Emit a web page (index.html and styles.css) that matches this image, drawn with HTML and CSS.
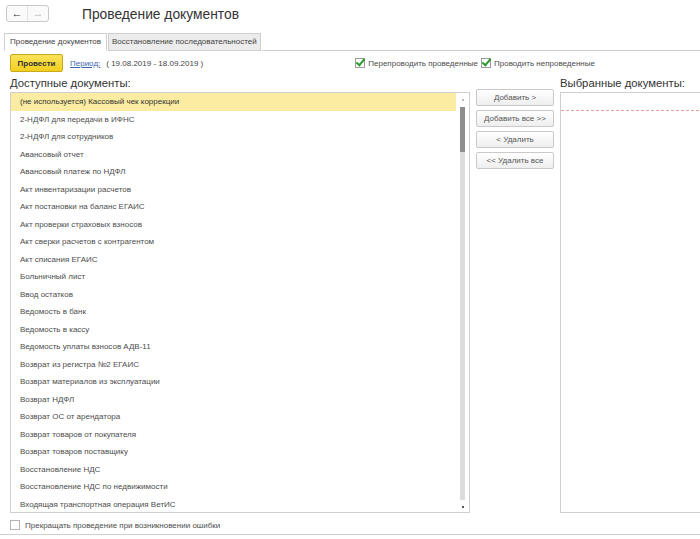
FILE: index.html
```html
<!DOCTYPE html>
<html lang="ru">
<head>
    <meta charset="UTF-8">
    <title>Проведение документов</title>
    <link rel="stylesheet" href="styles.css">
</head>
<body>
    <div class="window">
        <div class="header">
            <div class="nav">
                <span class="nav-btn">&#8592;</span>
                <span class="nav-btn off">&#8594;</span>
            </div>
            <h1>Проведение документов</h1>
        </div>

        <div class="tabs">
            <div class="tab active">Проведение документов</div>
            <div class="tab">Восстановление последовательностей</div>
            <div class="tab-line"></div>
        </div>

        <div class="panel">
            <div class="toolbar">
                <button class="btn-main">Провести</button>
                <a class="period-link">Период:</a>
                <span class="period">( 19.08.2019 - 18.09.2019 )</span>
                <label class="check"><span class="box checked"></span>Перепроводить проведенные</label>
                <label class="check"><span class="box checked"></span>Проводить непроведенные</label>
            </div>

            <div class="main">
                <div class="col-left">
                    <div class="caption">Доступные документы:</div>
                    <div class="list">
                        <ul class="items">
                            <li class="selected">(не используется) Кассовый чек коррекции</li>
                            <li>2-НДФЛ для передачи в ИФНС</li>
                            <li>2-НДФЛ для сотрудников</li>
                            <li>Авансовый отчет</li>
                            <li>Авансовый платеж по НДФЛ</li>
                            <li>Акт инвентаризации расчетов</li>
                            <li>Акт постановки на баланс ЕГАИС</li>
                            <li>Акт проверки страховых взносов</li>
                            <li>Акт сверки расчетов с контрагентом</li>
                            <li>Акт списания ЕГАИС</li>
                            <li>Больничный лист</li>
                            <li>Ввод остатков</li>
                            <li>Ведомость в банк</li>
                            <li>Ведомость в кассу</li>
                            <li>Ведомость уплаты взносов АДВ-11</li>
                            <li>Возврат из регистра №2 ЕГАИС</li>
                            <li>Возврат материалов из эксплуатации</li>
                            <li>Возврат НДФЛ</li>
                            <li>Возврат ОС от арендатора</li>
                            <li>Возврат товаров от покупателя</li>
                            <li>Возврат товаров поставщику</li>
                            <li>Восстановление НДС</li>
                            <li>Восстановление НДС по недвижимости</li>
                            <li>Входящая транспортная операция ВетИС</li>
                        </ul>
                        <div class="scrollbar">
                            <span class="arrow"></span>
                            <div class="track"><div class="thumb"></div></div>
                            <span class="arrow down"></span>
                        </div>
                    </div>
                </div>

                <div class="col-buttons">
                    <button class="btn">Добавить &gt;</button>
                    <button class="btn">Добавить все &gt;&gt;</button>
                    <button class="btn">&lt; Удалить</button>
                    <button class="btn">&lt;&lt; Удалить все</button>
                </div>

                <div class="col-right">
                    <div class="caption">Выбранные документы:</div>
                    <div class="list list-right">
                        <div class="empty-row"></div>
                    </div>
                </div>
            </div>

            <label class="check bottom-check"><span class="box"></span>Прекращать проведение при возникновении ошибки</label>
        </div>
    </div>
</body>
</html>
```

FILE: styles.css
```css
body {
    margin: 0;
    background-color: #fff;
    font-family: "Liberation Sans", Arial, sans-serif;
    color: #4d4d4d;
    overflow: hidden;
}

.window {
    width: 740px;
    height: 539px;
    display: flex;
    flex-direction: column;
}

.header {
    display: flex;
    align-items: center;
    height: 30px;
    padding-left: 6px;
}

.nav {
    display: flex;
    border: 1px solid #c8c8c8;
    border-radius: 3px;
    background-color: #fafafa;
    height: 15px;
    margin-top: -3px;
}

.nav-btn {
    width: 20px;
    font-size: 11px;
    line-height: 15px;
    text-align: center;
    color: #333;
}

.nav-btn.off {
    color: #b8b8b8;
    border-left: 1px solid #e2e2e2;
}

h1 {
    margin: 0 0 0 33px;
    font-size: 13.8px;
    font-weight: normal;
    color: #333;
    margin-top: -2px;
}

.tabs {
    display: flex;
    align-items: flex-end;
    height: 21px;
    padding-left: 4px;
}

.tab {
    height: 16px;
    line-height: 16px;
    padding: 0 5px;
    font-size: 8px;
    color: #444;
    background-color: #ececec;
    border: 1px solid #cfcfcf;
    margin-right: 1px;
}

.tab.active {
    background-color: #fff;
    border-bottom-color: #fff;
}

.tab + .tab {
    padding: 0 3px;
}

.tab-line {
    flex: 1;
    border-bottom: 1px solid #cfcfcf;
}

.panel {
    padding: 3px 10px 0 10px;
    border-bottom: 1px solid #cfcfcf;
    height: 484px;
    box-sizing: border-box;
}

.toolbar {
    display: flex;
    align-items: center;
    height: 18px;
    font-size: 8px;
}

.btn-main {
    height: 18px;
    width: 53px;
    padding: 0;
    font-family: inherit;
    font-size: 8px;
    font-weight: bold;
    color: #333;
    background: linear-gradient(#fbe35a, #f2cf1e);
    border: 1px solid #c9a91a;
    border-radius: 2px;
}

.period-link {
    margin-left: 7px;
    color: #3a67b0;
    text-decoration: underline;
}

.period {
    margin-left: 6px;
    color: #444;
}

.check {
    display: flex;
    align-items: center;
    font-size: 8px;
    color: #4d4d4d;
}

.toolbar .check:first-of-type {
    margin-left: auto;
}

.toolbar .check + .check {
    margin-left: 3px;
    margin-right: 135px;
}

.box {
    width: 8px;
    height: 8px;
    border: 1px solid #9a9a9a;
    background-color: #fff;
    margin-right: 3px;
    position: relative;
}

.box.checked::after {
    content: "";
    position: absolute;
    left: 2px;
    top: -2px;
    width: 3px;
    height: 7px;
    border: solid #2e9a2e;
    border-width: 0 2px 2px 0;
    transform: rotate(40deg);
}

.main {
    display: flex;
    gap: 6px;
    margin-top: 5px;
}

.caption {
    font-size: 11.3px;
    color: #333;
    height: 15px;
    line-height: 13px;
}

.col-left {
    width: 460px;
}

.list {
    border: 1px solid #cfcfcf;
    height: 421px;
    box-sizing: border-box;
    display: flex;
}

.items {
    list-style: none;
    margin: 0;
    padding: 0;
    flex: 1;
}

.items li {
    height: 17.5px;
    line-height: 17.5px;
    padding-left: 9px;
    font-size: 8px;
    color: #4d4d4d;
}

.items li.selected {
    background-color: #fbeca1;
    color: #333;
}

.scrollbar {
    width: 13px;
    display: flex;
    flex-direction: column;
    align-items: center;
    padding: 6px 0 4px 0;
}

.arrow {
    width: 2px;
    height: 2px;
    background-color: #bbb;
    margin-bottom: 6px;
}

.arrow.down {
    background-color: #555;
    margin: 6px 0 0 0;
}

.track {
    flex: 1;
    width: 5px;
    background-color: #dcdcdc;
}

.thumb {
    height: 45px;
    background-color: #8e8e8e;
}

.col-buttons {
    width: 78px;
    display: flex;
    flex-direction: column;
    gap: 4px;
    padding-top: 12px;
}

.btn {
    height: 17px;
    padding: 0;
    font-family: inherit;
    font-size: 8px;
    color: #555;
    background: linear-gradient(#ffffff, #eeeeee);
    border: 1px solid #c9c9c9;
    border-radius: 2px;
}

.col-right {
    flex: 1;
}

.list-right {
    display: block;
}

.empty-row {
    height: 17px;
    border-bottom: 1px dashed #eaa0a0;
}

.bottom-check {
    margin-top: 7px;
}

.bottom-check .box {
    border-color: #b5b5b5;
    margin-right: 5px;
}
```
